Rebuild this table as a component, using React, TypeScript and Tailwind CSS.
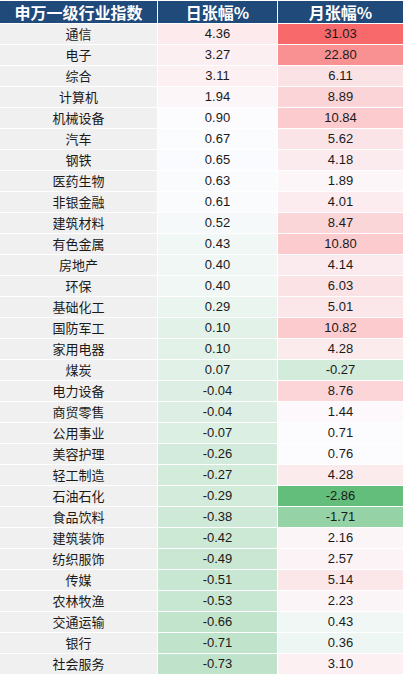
import React from "react";

type Row = [string, number, number];

const rows: Row[] = [
  ["通信", 4.36, 31.03],
  ["电子", 3.27, 22.8],
  ["综合", 3.11, 6.11],
  ["计算机", 1.94, 8.89],
  ["机械设备", 0.9, 10.84],
  ["汽车", 0.67, 5.62],
  ["钢铁", 0.65, 4.18],
  ["医药生物", 0.63, 1.89],
  ["非银金融", 0.61, 4.01],
  ["建筑材料", 0.52, 8.47],
  ["有色金属", 0.43, 10.8],
  ["房地产", 0.4, 4.14],
  ["环保", 0.4, 6.03],
  ["基础化工", 0.29, 5.01],
  ["国防军工", 0.1, 10.82],
  ["家用电器", 0.1, 4.28],
  ["煤炭", 0.07, -0.27],
  ["电力设备", -0.04, 8.76],
  ["商贸零售", -0.04, 1.44],
  ["公用事业", -0.07, 0.71],
  ["美容护理", -0.26, 0.76],
  ["轻工制造", -0.27, 4.28],
  ["石油石化", -0.29, -2.86],
  ["食品饮料", -0.38, -1.71],
  ["建筑装饰", -0.42, 2.16],
  ["纺织服饰", -0.49, 2.57],
  ["传媒", -0.51, 5.14],
  ["农林牧渔", -0.53, 2.23],
  ["交通运输", -0.66, 0.43],
  ["银行", -0.71, 0.36],
  ["社会服务", -0.73, 3.1],
];

const all = rows.flatMap((r) => [r[1], r[2]]).sort((a, b) => a - b);
const min = all[0];
const max = all[all.length - 1];
const mid = (all[30] + all[31]) / 2;

const lerp = (a: number, b: number, t: number) => Math.round(a + (b - a) * t);
const WHITE = [252, 252, 255];
const GREEN = [99, 190, 123];
const RED = [248, 105, 107];

function colorFor(v: number): string {
  let c: number[];
  if (v >= mid) {
    const t = (v - mid) / (max - mid);
    c = WHITE.map((w, i) => lerp(w, RED[i], t));
  } else {
    const t = (mid - v) / (mid - min);
    c = WHITE.map((w, i) => lerp(w, GREEN[i], t));
  }
  return `rgb(${c[0]},${c[1]},${c[2]})`;
}

function HeaderCell({ children }: { children: React.ReactNode }) {
  return (
    <div className="h-[22px] bg-[#1f4a7a] text-white font-bold text-[16px] leading-[22px] text-center font-['Noto_Sans_CJK_SC','Liberation_Sans',sans-serif]">
      {children}
    </div>
  );
}

export default function App() {
  return (
    <div className="w-[404px] h-[676px] bg-white overflow-hidden">
      <div className="grid grid-cols-[157px_119px_125px] gap-px pt-px">
        <HeaderCell>申万一级行业指数</HeaderCell>
        <HeaderCell>日张幅%</HeaderCell>
        <HeaderCell>月张幅%</HeaderCell>
        {rows.map(([name, d, m]) => (
          <React.Fragment key={name}>
            <div className="h-5 bg-[#f0f0f0] text-[13px] leading-5 text-center text-[#1a1a1a] font-['Noto_Sans_CJK_SC','Liberation_Sans',sans-serif]">
              {name}
            </div>
            <div
              className="h-5 text-[13px] leading-5 text-center text-[#1a1a1a] font-['Liberation_Sans',sans-serif]"
              style={{ backgroundColor: colorFor(d) }}
            >
              {d.toFixed(2)}
            </div>
            <div
              className="h-5 text-[13px] leading-5 text-center text-[#1a1a1a] font-['Liberation_Sans',sans-serif]"
              style={{ backgroundColor: colorFor(m) }}
            >
              {m.toFixed(2)}
            </div>
          </React.Fragment>
        ))}
      </div>
    </div>
  );
}
